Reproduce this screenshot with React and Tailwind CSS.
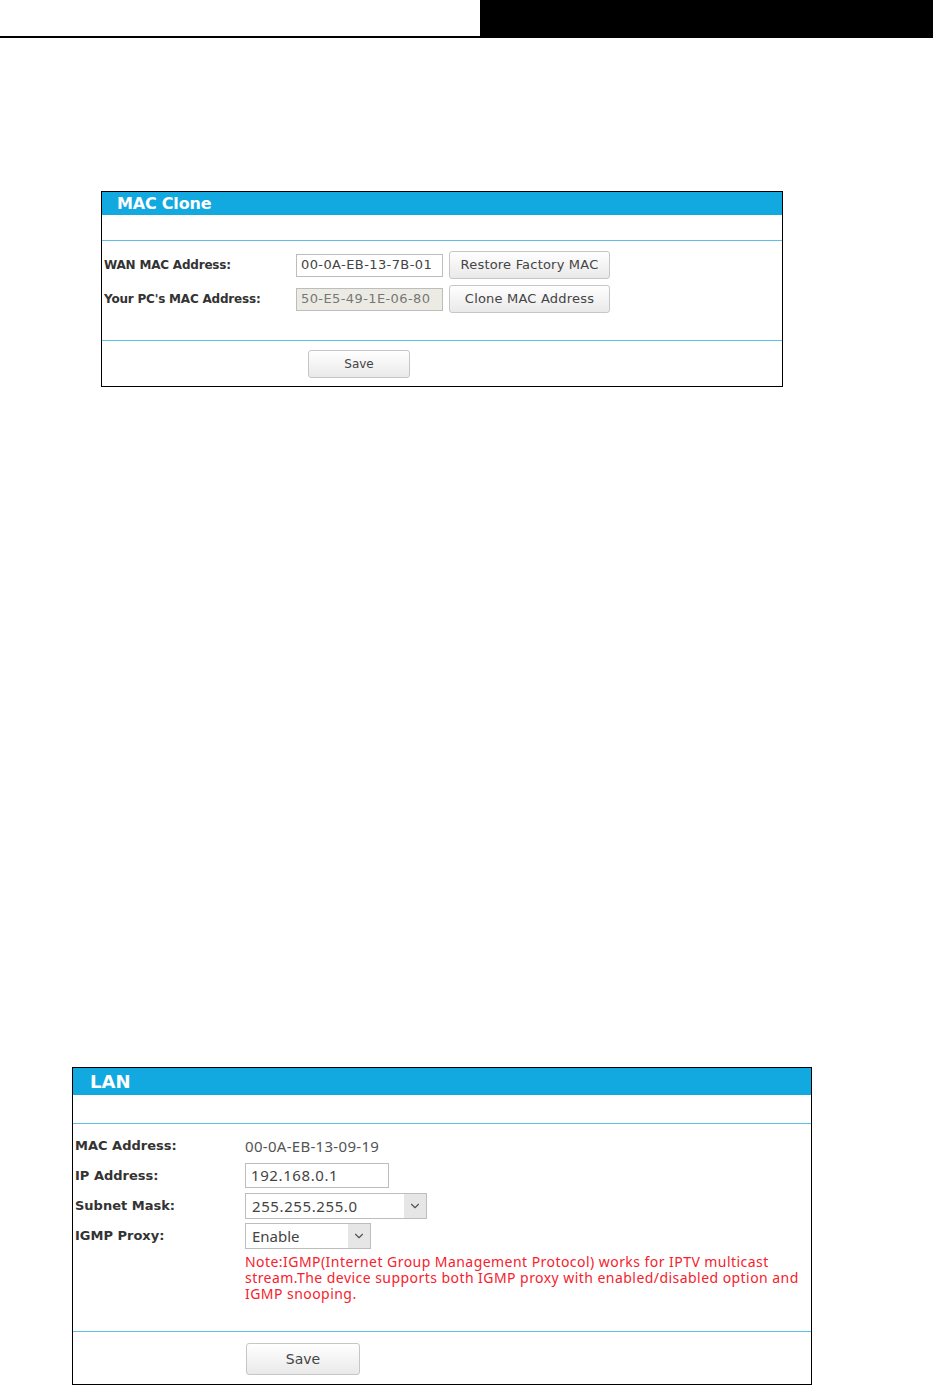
import { ChevronDown } from 'lucide-react';

const label = 'font-["DejaVu_Sans",sans-serif] font-bold text-[#333]';
const btn =
  'flex items-center justify-center rounded-[3px] border border-[#c6c6c6] bg-gradient-to-b from-white to-[#e9e9e9] text-[#444] font-["DejaVu_Sans",sans-serif]';

function Select({ value, width, numeric }) {
  return (
    <div className={`flex h-[26px] ${width} border border-[#bdbdbd] bg-white`}>
      <span
        className={`flex-1 pl-[6px] leading-[24px] text-[#444] font-["Noto_Sans",sans-serif] ${
          numeric ? 'text-[15px] tracking-[0.6px]' : 'text-[15px]'
        }`}
      >
        {value}
      </span>
      <span className="flex w-[22px] items-center justify-center bg-[#e6e6e6]">
        <ChevronDown className="h-[14px] w-[14px] text-[#555]" strokeWidth={2} />
      </span>
    </div>
  );
}

export default function App() {
  return (
    <div className="min-h-[1386px] w-[933px] bg-white">
      {/* page header strip */}
      <div className="flex h-[36px]">
        <div className="flex-1" />
        <div className="w-[453px] bg-black" />
      </div>
      <div className="h-[2px] bg-black" />

      {/* MAC Clone panel */}
      <div className="ml-[101px] mt-[153px] w-[682px] border border-black">
        <div className='h-[23px] bg-[#12a9e0] pl-[15px] text-[16px] font-bold leading-[23px] text-white font-["DejaVu_Sans",sans-serif] tracking-[-0.2px]'>
          MAC Clone
        </div>
        <div className="h-[26px] border-b border-[#5cc1ea]" />
        <div className="flex flex-col gap-[6px] border-b border-[#5cc1ea] pb-[27px] pl-[2px] pt-[10px]">
          <div className="flex h-[28px] items-center">
            <span className={`${label} w-[192px] text-[12px] tracking-[-0.2px]`}>WAN MAC Address:</span>
            <div className='flex h-[23px] w-[147px] items-center border border-[#bdbdbd] bg-white pl-[4px] text-[13px] tracking-[0.4px] text-[#444] font-["DejaVu_Sans",sans-serif]'>
              00-0A-EB-13-7B-01
            </div>
            <button className={`${btn} ml-[6px] h-[28px] w-[161px] text-[13px] tracking-[0.2px]`}>Restore Factory MAC</button>
          </div>
          <div className="flex h-[28px] items-center">
            <span className={`${label} w-[192px] text-[12px] tracking-[-0.2px]`}>Your PC's MAC Address:</span>
            <div className='flex h-[23px] w-[147px] items-center border border-[#bdbdbd] bg-[#ebebe4] pl-[4px] text-[13px] tracking-[0.4px] text-[#777] font-["DejaVu_Sans",sans-serif]'>
              50-E5-49-1E-06-80
            </div>
            <button className={`${btn} ml-[6px] h-[28px] w-[161px] text-[13px] tracking-[0.2px]`}>Clone MAC Address</button>
          </div>
        </div>
        <div className="pb-[8px] pl-[206px] pt-[9px]">
          <button className={`${btn} h-[28px] w-[102px] text-[12px]`}>Save</button>
        </div>
      </div>

      {/* LAN panel */}
      <div className="ml-[72px] mt-[680px] w-[740px] border border-black">
        <div className='h-[27px] bg-[#12a9e0] pl-[17px] text-[18px] font-bold leading-[27px] text-white font-["DejaVu_Sans",sans-serif]'>
          LAN
        </div>
        <div className="h-[29px] border-b border-[#5cc1ea]" />
        <div className="border-b border-[#5cc1ea] pb-[29px] pl-[2px] pt-[11px]">
          <div className="flex h-[22px] items-center">
            <span className={`${label} w-[170px] text-[13px]`}>MAC Address:</span>
            <span className='text-[15px] tracking-[0.3px] text-[#555] font-["Noto_Sans",sans-serif]'>00-0A-EB-13-09-19</span>
          </div>
          <div className="mt-[6px] flex h-[25px] items-center">
            <span className={`${label} w-[170px] text-[13px]`}>IP Address:</span>
            <div className='flex h-[25px] w-[144px] items-center border border-[#bdbdbd] pl-[5px] text-[15px] tracking-[0.6px] text-[#444] font-["Noto_Sans",sans-serif]'>
              192.168.0.1
            </div>
          </div>
          <div className="mt-[5px] flex h-[26px] items-center">
            <span className={`${label} w-[170px] text-[13px]`}>Subnet Mask:</span>
            <Select value="255.255.255.0" width="w-[182px]" numeric />
          </div>
          <div className="mt-[4px] flex h-[26px] items-center">
            <span className={`${label} w-[170px] text-[13px]`}>IGMP Proxy:</span>
            <Select value="Enable" width="w-[126px]" />
          </div>
          <p className='ml-[170px] mt-[5px] pr-[4px] text-[14px] leading-[16px] tracking-[0.45px] text-[#f5222d] font-["Noto_Sans",sans-serif]'>
            Note:IGMP(Internet Group Management Protocol) works for IPTV multicast stream.The device supports both IGMP
            proxy with enabled/disabled option and IGMP snooping.
          </p>
        </div>
        <div className="pb-[9px] pl-[173px] pt-[11px]">
          <button className={`${btn} h-[32px] w-[114px] text-[14px]`}>Save</button>
        </div>
      </div>
    </div>
  );
}
